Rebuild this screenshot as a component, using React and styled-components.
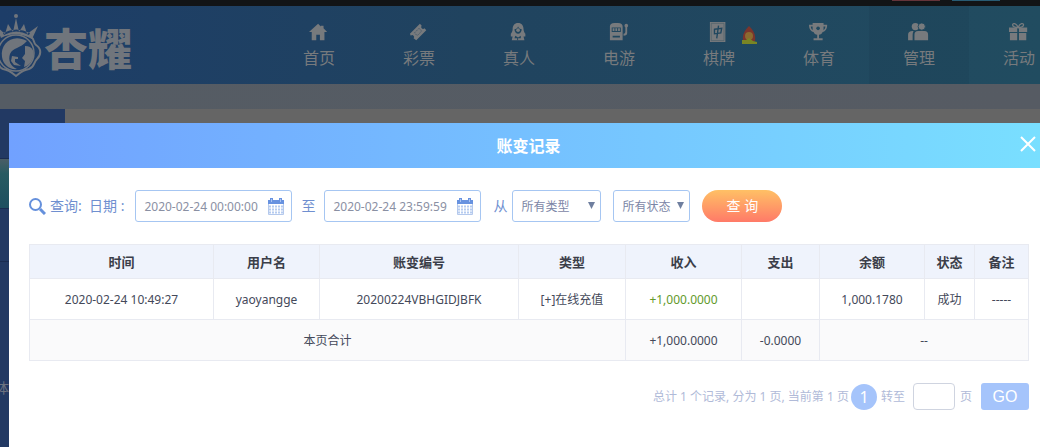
import React from "react";
import styled, { createGlobalStyle } from "styled-components";

const GlobalStyle = createGlobalStyle`
  *, *::before, *::after { box-sizing: border-box; }
  html, body, #root { height: 100%; }
  body {
    margin: 0;
    background: #656565;
    color: #44495a;
    font: 12px/20px "Noto Sans", "Noto Sans CJK SC", sans-serif;
    overflow: hidden;
  }
  button, input, select { font: inherit; margin: 0; }
`;

const Page = styled.div`
  min-height: 100%;
  display: flex;
  flex-direction: column;
  position: relative;
`;

const TopStrip = styled.div`
  height: 6px;
  background: #121416;
  display: flex;
  justify-content: flex-end;
  gap: 12px;
  padding-right: 40px;
`;

const StripTab = styled.span`
  width: 48px;
  height: 1px;
  background: ${(p) => p.$color};
`;

const Header = styled.header`
  height: 78px;
  display: flex;
  overflow: hidden;
  background: linear-gradient(90deg, #1d3d68 0%, #20435f 45%, #214c60 100%);
`;

const Logo = styled.a`
  flex: 0 0 269px;
  display: flex;
  align-items: center;
  gap: 2px;
  padding-top: 4px;
  color: #70757c;
  text-decoration: none;
  font: 900 44px/74px "Noto Sans CJK SC", sans-serif;

  svg { flex: none; }
`;

const Nav = styled.nav`
  display: flex;
`;

const NavItem = styled.a`
  flex: 0 0 100px;
  display: flex;
  flex-direction: column;
  align-items: center;
  gap: 4px;
  padding-top: 16px;
  color: #777a7d;
  background: ${(p) => (p.$active ? "rgba(0, 20, 30, 0.06)" : "none")};
  font-size: 16px;
  line-height: 24px;
  text-decoration: none;
`;

const NavIcon = styled.span`
  display: flex;
  position: relative;
`;

const HotBadge = styled.svg`
  position: absolute;
  left: 33px;
  top: 4px;
`;

const Band = styled.div`
  height: 25px;
  background: linear-gradient(90deg, #555c64, #565b63);
`;

const Body = styled.div`
  flex: 1;
  display: flex;
`;

const Sidebar = styled.aside`
  width: 65px;
  background: #223963;
  display: flex;
  flex-direction: column;
  overflow: hidden;
`;

const SideItem = styled.div`
  height: ${(p) => p.$height}px;
  border-bottom: 1px solid #1a2c50;
  background: ${(p) => (p.$active ? "linear-gradient(#4a5d66, #285b62 30%, #1d4f60)" : "none")};
`;

const SideText = styled.div`
  padding-top: 116px;
  margin-left: -5px;
  font-size: 14px;
  color: #6c7380;
`;

const Dialog = styled.section`
  position: absolute;
  left: 9px;
  right: 0;
  top: 123px;
  bottom: 0;
  background: #fff;
`;

const DialogHeader = styled.header`
  display: flex;
  align-items: center;
  height: 45px;
  padding: 0 4px 0 28px;
  background: linear-gradient(90deg, #71a1ff, #79dfff);
  color: #fff;
`;

const DialogTitle = styled.h1`
  flex: 1;
  margin: 0;
  font-size: 16px;
  line-height: 24px;
  font-weight: 700;
  text-align: center;
`;

const CloseButton = styled.button`
  display: flex;
  padding: 0 0 4px;
  border: 0;
  background: none;
  color: #fff;
`;

const DialogBody = styled.div`
  display: flex;
  flex-direction: column;
  gap: 22px;
  padding: 22px 11px 0 20px;
`;

const Filters = styled.form`
  display: flex;
  align-items: center;
  height: 32px;
  color: #6f8fd0;
  font-size: 14px;
`;

const FilterLabel = styled.label`
  white-space: nowrap;
  margin: 0 ${(p) => p.$after}px 0 ${(p) => p.$before}px;
`;

const FilterTitle = styled.span`
  width: 39px;
  margin-left: 4px;
`;

const DateBox = styled.span`
  display: flex;
  align-items: center;
  width: 157px;
  height: 32px;
  padding: 0 7px 0 8px;
  border: 1px solid #a6c6f2;
  border-radius: 3px;
`;

const DateInput = styled.input`
  flex: 1;
  min-width: 0;
  height: 28px;
  padding: 0;
  border: 0;
  outline: 0;
  background: none;
  color: #8a90a3;
  font-size: 12px;
`;

const SelectBox = styled.span`
  position: relative;
  width: ${(p) => p.$width}px;
  margin-right: 12px;

  svg {
    position: absolute;
    right: 6px;
    top: 12px;
    pointer-events: none;
  }
`;

const Select = styled.select`
  display: block;
  appearance: none;
  width: 100%;
  height: 32px;
  padding: 2px 8px 0;
  border: 1px solid #a6c6f2;
  border-radius: 3px;
  background: #fff;
  color: #7c86a6;
  font-size: 12px;
`;

const SearchButton = styled.button`
  width: 80px;
  height: 32px;
  padding: 0;
  border: 0;
  border-radius: 16px;
  background: linear-gradient(#ffc065, #ff7a68);
  color: #fff;
  font-size: 14px;
`;

const Table = styled.table`
  width: 100%;
  table-layout: fixed;
  border-collapse: collapse;
  text-align: center;

  th, td { border: 1px solid #e8eaf1; padding: 0; }
  th { height: 34px; background: #eff3fc; color: #3b3e49; font-size: 13px; font-weight: 700; }
  td { height: 41px; padding-top: 2px; }
  tfoot td { background: #fafafb; }
`;

const Income = styled.td`
  color: #639a2c;
`;

const Pager = styled.div`
  display: flex;
  align-items: center;
  justify-content: flex-end;
  height: 27px;
  color: #b0bad8;
`;

const PageNumber = styled.button`
  width: 26px;
  height: 26px;
  margin: 0 4px 0 2px;
  padding: 0;
  border: 0;
  border-radius: 50%;
  background: #a5c4fb;
  color: #fff;
  font-size: 16px;
  line-height: 26px;
`;

const PageInput = styled.input`
  width: 42px;
  height: 27px;
  margin: 0 5px 0 8px;
  border: 1px solid #cfd4e0;
  border-radius: 4px;
  background: #fff;
`;

const GoButton = styled.button`
  width: 48px;
  height: 27px;
  margin-left: 9px;
  padding: 0;
  border: 0;
  border-radius: 3px;
  background: #a5c4fb;
  color: #fff;
  font: 16px/27px "Liberation Sans", sans-serif;
`;

const icons = {
  home: <path d="M10 1 0 10h3v9h5v-6h4v6h5v-9h3l-4-4V3h-3v1z" />,
  ticket: (
    <g>
      <path d="m12 1 2 2a2 2 0 0 0 3 3l2 2L8 19l-3-2a2 2 0 0 0-3-3l-1-2z" />
      <path d="m11 6 3 3-5 5-3-3z" fill="none" stroke="#45586a" strokeDasharray="2 1" />
    </g>
  ),
  dealer: (
    <g>
      <path d="M10 0C6 0 4 3 4 7c0 2-1 4-2 5v3h2l-1 4h14l-1-4h2v-3c-1-1-2-3-2-5 0-4-2-7-6-7" />
      <path d="M6 7c2 0 3-1 4-3 1 2 2 3 4 3 0 3-2 5-4 5S6 10 6 7m1 7 3 2 3-2v3h-3v2h-1v-2H6z" fill="#20465f" />
      <circle cx="10" cy="8" r="2" />
    </g>
  ),
  slot: (
    <g>
      <path d="M1 4q0-4 5-4h4q5 0 5 4v15H1zM18 3h2v8q0 3-4 3v-2q2 0 2-2z" />
      <circle cx="19" cy="3" r="2" />
      <path d="M3 5h10v5H3zm1 9h8v2H4z" fill="#20475f" />
      <path d="M4 6h2v3H4zm3 0h2v3H7zm3 0h2v3h-2z" />
    </g>
  ),
  mahjong: (
    <g>
      <path d="M1-1h17v22H1z" />
      <path d="M2.500.500h14v19h-14z" fill="none" stroke="#4b5f6a" strokeWidth=".7" />
      <path d="m10.500 3-2 14M6 7l8-1-1 5-7 1z" fill="none" stroke="#20475f" strokeWidth="1.500" />
    </g>
  ),
  trophy: (
    <g>
      <path d="M4 0h12v2h4c0 5-2 7-5 8-1 2-2 3-4 3v4h4v2H5v-2h4v-4c-2 0-3-1-4-3-3-1-5-3-5-8h4zM2 4c0 2 1 3 2 4V4zm14 0v4c1-1 2-2 2-4z" fillRule="evenodd" />
      <circle cx="10" cy="6" r="2" fill="#21495f" />
    </g>
  ),
  people: (
    <g>
      <circle cx="7" cy="4" r="4" />
      <circle cx="14" cy="4" r="4" stroke="#20485e" />
      <path d="M-1 19v-6q0-4 5-4h1q-1 2-1 4v6zM6 19v-6q0-4 4-4h7q4 0 4 4v6z" />
    </g>
  ),
  gift: (
    <g>
      <path d="M0 5h9v5H0zm11 0h9v5h-9zM1 11h8v8H1zm10 0h8v8h-8z" />
      <path d="M10 5C7 5 4 4 4 2s4-2 6 3c2-5 6-5 6-3s-3 3-6 3" fill="none" stroke="currentColor" strokeWidth="1.500" />
    </g>
  ),
};

const navItems = [
  { label: "首页", icon: "home" },
  { label: "彩票", icon: "ticket" },
  { label: "真人", icon: "dealer" },
  { label: "电游", icon: "slot" },
  { label: "棋牌", icon: "mahjong", hot: true },
  { label: "体育", icon: "trophy" },
  { label: "管理", icon: "people", active: true },
  { label: "活动", icon: "gift" },
];

const columns = [
  ["时间", 184],
  ["用户名", 106],
  ["账变编号", 199],
  ["类型", 107],
  ["收入", 116],
  ["支出", 78],
  ["余额", 105],
  ["状态", 50],
  ["备注", 54],
];
const totalWidth = columns.reduce((sum, [, w]) => sum + w, 0);

function Emblem() {
  return (
    <svg width="42" height="66" viewBox="0 0 42 66" fill="none" stroke="currentColor" aria-hidden="true">
      <path d="M1 24-4 12l9 8 3-10 5 8 3-14 3 14 5-8 3 10 11-8-6 13Q16 16 1 24zM4 21Q16 14 29 21l1-2Q16 12 3 19z" fill="currentColor" stroke="none" fillRule="evenodd" />
      <circle cx="16" cy="2" r="2" fill="currentColor" stroke="none" />
      <path d="M31 23c4 2 2 6 5 8 6 4 5 10 1 14-4 4-2 8-8 10-6 1-8 3-13 7-5-4-7-6-13-7-3-1-4-3-5-6" strokeWidth="2" />
      <circle cx="16" cy="39" r="18" strokeWidth="1.500" />
      <path d="M27 27C13 19 0 29 2 43c1 8 8 13 15 12-7-3-9-9-7-15 3-7 10-5 17-13z" fill="currentColor" stroke="none" />
      <path d="M25 32c8 0 10 6 8 12-2 5-5 8-9 9l1-6-3-3 3-4zM12 42l6 1v2h-3v3l6 4-7-1-3-4z" fill="currentColor" stroke="none" />
    </svg>
  );
}

function CalendarIcon() {
  return (
    <svg width="16" height="17" viewBox="0 0 16 17" aria-hidden="true">
      <path d="M0 2h2V0h3v2h6V0h3v2h2v4H0z" fill="#6792e0" />
      <path d="M3.500 1v3M12.500 1v3" stroke="#a9c3f2" />
      <path d="M1 8.500h14M1 11.500h14M1 14.500h14" stroke="#b5cbf0" strokeWidth="2" strokeDasharray="2 1" />
      <path d="M.5 6v10.500h15V6" fill="none" stroke="#b5c9ec" />
    </svg>
  );
}

function DateField({ id, value }) {
  return (
    <DateBox>
      <DateInput id={id} defaultValue={value} />
      <CalendarIcon />
    </DateBox>
  );
}

function FilterSelect({ width, label }) {
  return (
    <SelectBox $width={width}>
      <Select aria-label={label}>
        <option>{label}</option>
      </Select>
      <svg width="7" height="7" viewBox="0 0 7 7" aria-hidden="true">
        <path d="M0 0h7L3.500 7z" fill="#6f7f9f" />
      </svg>
    </SelectBox>
  );
}

export default function App() {
  return (
    <Page>
      <GlobalStyle />
      <TopStrip>
        <StripTab $color="#64343a" />
        <StripTab $color="#285b73" />
      </TopStrip>
      <Header>
        <Logo href="#">
          <Emblem />
          杏耀
        </Logo>
        <Nav>
          {navItems.map((item) => (
            <NavItem key={item.label} href="#" $active={item.active}>
              <NavIcon>
                <svg width="22" height="20" viewBox="0 -1 22 22" fill="currentColor" aria-hidden="true">
                  {icons[item.icon]}
                </svg>
                {item.hot && (
                  <HotBadge width="17" height="19" viewBox="0 0 17 19" aria-hidden="true">
                    <path d="M2 15C1 8 4 4 8 0c4 4 7 8 6 15z" fill="#7a352d" />
                    <circle cx="8" cy="10" r="4" fill="#8a6a30" />
                    <path d="M1 14h4l3-2 4 3 4 1v2H1z" fill="#7a8524" />
                  </HotBadge>
                )}
              </NavIcon>
              {item.label}
            </NavItem>
          ))}
        </Nav>
      </Header>
      <Band />
      <Body>
        <Sidebar>
          <SideItem $height={50} />
          <SideItem $height={50} $active />
          <SideItem $height={53} />
          <SideText>体育</SideText>
        </Sidebar>
      </Body>

      <Dialog role="dialog" aria-labelledby="dialog-title">
        <DialogHeader>
          <DialogTitle id="dialog-title">账变记录</DialogTitle>
          <CloseButton type="button" aria-label="关闭">
            <svg width="16" height="16" viewBox="0 0 16 16" fill="none" stroke="currentColor" strokeWidth="2" aria-hidden="true">
              <path d="m1 1 14 14M15 1 1 15" />
            </svg>
          </CloseButton>
        </DialogHeader>
        <DialogBody>
          <Filters onSubmit={(e) => e.preventDefault()}>
            <svg width="17" height="17" viewBox="0 0 17 17" fill="none" stroke="#6590dc" aria-hidden="true">
              <circle cx="6.500" cy="6.500" r="5.500" strokeWidth="2" />
              <path d="m11 11 5 5" strokeWidth="3" />
            </svg>
            <FilterTitle>查询:</FilterTitle>
            <FilterLabel htmlFor="from" $before={0} $after={11}>日期 :</FilterLabel>
            <DateField id="from" value="2020-02-24 00:00:00" />
            <FilterLabel htmlFor="to" $before={9} $after={9}>至</FilterLabel>
            <DateField id="to" value="2020-02-24 23:59:59" />
            <FilterLabel as="span" $before={12} $after={5}>从</FilterLabel>
            <FilterSelect width={89} label="所有类型" />
            <FilterSelect width={77} label="所有状态" />
            <SearchButton type="submit">查 询</SearchButton>
          </Filters>

          <Table>
            <colgroup>
              {columns.map(([name, w]) => (
                <col key={name} style={{ width: `${(w / totalWidth) * 100}%` }} />
              ))}
            </colgroup>
            <thead>
              <tr>
                {columns.map(([name]) => (
                  <th key={name} scope="col">{name}</th>
                ))}
              </tr>
            </thead>
            <tbody>
              <tr>
                <td>2020-02-24 10:49:27</td>
                <td>yaoyangge</td>
                <td>20200224VBHGIDJBFK</td>
                <td>[+]在线充值</td>
                <Income>+1,000.0000</Income>
                <td />
                <td>1,000.1780</td>
                <td>成功</td>
                <td>-----</td>
              </tr>
            </tbody>
            <tfoot>
              <tr>
                <td colSpan={4}>本页合计</td>
                <td>+1,000.0000</td>
                <td>-0.0000</td>
                <td colSpan={3}>--</td>
              </tr>
            </tfoot>
          </Table>

          <Pager>
            <span>总计 1 个记录, 分为 1 页, 当前第 1 页</span>
            <PageNumber type="button">1</PageNumber>
            <label htmlFor="page">转至</label>
            <PageInput id="page" />
            <span>页</span>
            <GoButton type="button">GO</GoButton>
          </Pager>
        </DialogBody>
      </Dialog>
    </Page>
  );
}
